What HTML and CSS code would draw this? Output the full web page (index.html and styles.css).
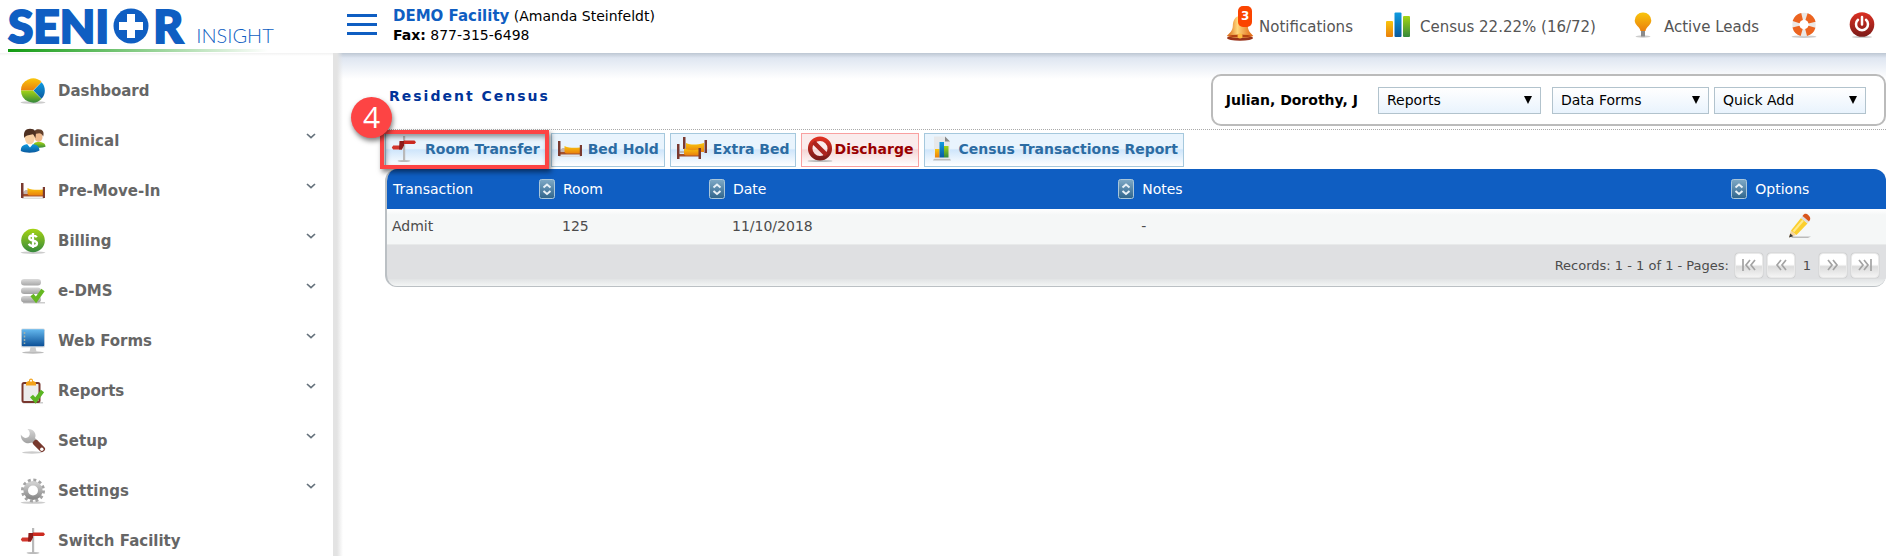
FILE: index.html
```html
<!DOCTYPE html>
<html lang="en">
<head>
    <meta charset="UTF-8">
    <meta name="viewport" content="width=device-width, initial-scale=1.0">
    <title>Senior Insight - Resident Census</title>
    <link rel="stylesheet" href="styles.css">
</head>
<body>
    <!-- shared icons -->
    <svg class="defs" width="0" height="0" aria-hidden="true">
        <defs>
            <linearGradient id="g-orange" x2="0" y2="1"><stop stop-color="#f9c50c"/><stop offset="1" stop-color="#ea800d"/></linearGradient>
            <linearGradient id="g-blue" x2="0" y2="1"><stop stop-color="#0e9be0"/><stop offset="1" stop-color="#0b5a9e"/></linearGradient>
            <linearGradient id="g-green" x2="0" y2="1"><stop stop-color="#a5d414"/><stop offset="1" stop-color="#35893c"/></linearGradient>
            <linearGradient id="g-grey" x2="0" y2="1"><stop stop-color="#cfcfcf"/><stop offset="1" stop-color="#8b8b8b"/></linearGradient>
            <linearGradient id="g-red" x2="0" y2="1"><stop stop-color="#dc3022"/><stop offset="1" stop-color="#7c1b19"/></linearGradient>
            <linearGradient id="g-screen" x2="0" y2="1"><stop stop-color="#64b8ee"/><stop offset="1" stop-color="#0b4f96"/></linearGradient>
            <linearGradient id="g-bell" x2="1"><stop stop-color="#d9600c"/><stop offset=".4" stop-color="#ffd77c"/><stop offset="1" stop-color="#e0600c"/></linearGradient>
            <linearGradient id="g-sort" x2="0" y2="1"><stop stop-color="#7fa9c6"/><stop offset="1" stop-color="#2f658c"/></linearGradient>
        </defs>
        <symbol id="i-pie" viewBox="0 0 26 26">
            <ellipse cx="13" cy="24.500" rx="12.500" ry="1.300" fill="#ccc"/>
            <path d="M13 12.500H1A12 11.800 0 0 1 21.500 4z" fill="url(#g-orange)"/>
            <path d="M13 12.500H1A12 12 0 0 0 21.500 21z" fill="url(#g-green)"/>
            <path d="M13.500 12.500 21.500 4.200a12 12 0 0 1 0 16.600z" fill="url(#g-blue)"/>
        </symbol>
        <symbol id="i-people" viewBox="0 0 26 26">
            <path d="M13 19c0-4 2-5 5.500-5 4.500 0 7 1.500 7 4.800-4 1.400-8 1.200-12.500.2z" fill="url(#g-green)"/>
            <ellipse cx="18.500" cy="9" rx="4" ry="5" fill="#efb98c"/>
            <path d="M13.800 7c-.5-4 2-6 5-5.800 4 0 5.600 3 4.400 7.300-1-2-2-3-4-3.200-2 0-4 .7-5.400 1.700z" fill="#63402c"/>
            <path d="M.8 23c0-5 2.500-7 9-7s9.600 2 9.700 6.500c-5 2.800-14 2.800-18.700.5z" fill="url(#g-blue)"/>
            <path d="m7 16 3 3.500 3-3.500z" fill="#fff"/>
            <ellipse cx="9.800" cy="10" rx="5" ry="6.300" fill="#f8d0a4"/>
            <path d="M4.300 10C3 4 5.500.8 10 .8c5 0 7 3.200 5.300 9.500-1-2-1.500-3.400-2.500-4C10 7.500 6.500 6.500 4.300 10z" fill="#4e3021"/>
        </symbol>
        <symbol id="i-bed" viewBox="0 0 26 26">
            <path d="M2 19.500h22V21H2z" fill="#ddd"/>
            <path d="M3 14.500c2-3 4-2.500 5-2l.5 4H3z" fill="#c3b3ae"/>
            <path d="M3 16h20v2.500H3z" fill="#a4502b"/>
            <path d="M7.500 10c5 2.300 10 2 15.500 1.500v6H10c-2 0-2.500-1-2.500-2.500z" fill="url(#g-orange)"/>
            <path d="M1 5h2.500v15H1zM22.800 9H25v11h-2.200z" fill="#7a3a30"/>
        </symbol>
        <symbol id="i-beds" viewBox="0 0 32 26">
            <path d="M10 7c5 2 10 2 18 0v9H10z" fill="url(#g-orange)"/>
            <path d="M7 1h2.500v12H7zM28.500 4H31v13h-2.500z" fill="#7a3a30"/>
            <path d="M3 18h20v2.500H3z" fill="#a4502b"/>
            <path d="M8 12.500c5 2 9 2 15 1v6H10c-1.500 0-2-1-2-2.500z" fill="url(#g-orange)"/>
            <path d="M4 15h4v2H4z" fill="#bbb"/>
            <path d="M1 8h2.500v15H1zM22.500 12H25v11h-2.500z" fill="#7a3a30"/>
        </symbol>
        <symbol id="i-dollar" viewBox="0 0 26 26">
            <ellipse cx="13" cy="24.600" rx="12.500" ry="1.300" fill="#ccc"/>
            <circle cx="13" cy="12.500" r="11.800" fill="url(#g-green)"/>
            <path d="M16.800 9.300c-.8-1.500-2.200-2-3.800-2-2.200 0-3.800 1-3.800 2.700 0 3.800 7.800 1.500 7.800 5.300 0 1.700-1.700 2.800-4 2.800-2 0-3.500-.8-4.200-2.300M13 5v15" fill="none" stroke="#fff" stroke-width="2.300"/>
        </symbol>
        <symbol id="i-db" viewBox="0 0 26 26">
            <path d="M3 24h22v1.500H3z" fill="#ccc"/>
            <rect x="1" y="1" width="20" height="6.500" rx="3.200" fill="url(#g-grey)" opacity=".75"/>
            <rect x="1" y="9.500" width="20" height="6.500" rx="3.200" fill="url(#g-grey)" opacity=".8"/>
            <rect x="1" y="18" width="20" height="6.500" rx="3.200" fill="url(#g-grey)" opacity=".85"/>
            <path d="m12 17 4 5 7-10" fill="none" stroke="#65b821" stroke-width="4"/>
        </symbol>
        <symbol id="i-screen" viewBox="0 0 26 26">
            <ellipse cx="13" cy="24.500" rx="11" ry="1.200" fill="#bbb"/>
            <path d="M10.500 19h5l1 5h-7z" fill="#ccc"/>
            <rect x="1" y=".5" width="24" height="19" rx="1.500" fill="#d8dde2"/>
            <rect x="1.800" y="1.300" width="22.400" height="17" rx="1" fill="url(#g-screen)"/>
            <path d="M4.500 4v12" stroke="#9fb1ad" stroke-width="1.500" stroke-dasharray="2 1.500"/>
        </symbol>
        <symbol id="i-clip" viewBox="0 0 26 26">
            <path d="M3 24h20v1.500H3z" fill="#ccc"/>
            <rect x="2.500" y="5" width="17" height="19" rx="1.500" fill="#ececec" stroke="#78372e" stroke-width="2"/>
            <path d="M6 7.500V5c0-1.500 2-1.500 3-2C9-.2 13-.2 13 3c1 .5 3 .5 3 2v2.500z" fill="#f3a21a"/>
            <circle cx="11" cy="2.800" r="1" fill="#fff"/>
            <path d="m11.500 18 4 4.500 7-9.500" fill="none" stroke="#5ab522" stroke-width="4"/>
        </symbol>
        <symbol id="i-wrench" viewBox="0 0 26 26">
            <ellipse cx="12" cy="24.500" rx="10" ry="1.200" fill="#ccc"/>
            <path d="M7.500 1c6-.5 9.500 5 7.500 9l3 3-3.500 3.500-3-2C7 17 .5 13.500.8 6.500c2.500 4 6 4.200 8 2C10.500 6.500 10 3 7.500 1z" fill="url(#g-grey)" opacity=".85"/>
            <path d="m16 15 6 6" stroke="#77392e" stroke-width="6" stroke-linecap="round"/>
            <circle cx="21.800" cy="21.200" r="1.700" fill="#fff"/>
        </symbol>
        <symbol id="i-gear" viewBox="0 0 26 26">
            <ellipse cx="13" cy="24.600" rx="12.500" ry="1.200" fill="#ccc"/>
            <circle cx="13" cy="12.500" r="10.500" fill="none" stroke="#a4a4a4" stroke-width="3" stroke-dasharray="2.900 2.600"/>
            <circle cx="13" cy="12.500" r="7.300" fill="none" stroke="url(#g-grey)" stroke-width="4.600"/>
        </symbol>
        <symbol id="i-sign" viewBox="0 0 26 26">
            <ellipse cx="13" cy="25" rx="6.500" ry=".9" fill="#bbb"/>
            <path d="M12 0h2.200v25H12z" fill="#b9b9b9"/>
            <path d="M13 4.500h10.500L25 6.200 23.500 8H13z" fill="#cc2a20"/>
            <path d="M10 9.500H2.200L.8 11.400l1.400 2H11z" fill="#d2362c"/>
            <path d="M8.500 5H13v4.500l-2 3.900H8z" fill="#8e1b19"/>
        </symbol>
        <symbol id="i-bars" viewBox="0 0 26 26">
            <rect x="1" y="9" width="7" height="16" rx="1" fill="url(#g-orange)"/>
            <rect x="9.500" y=".5" width="7" height="24.500" rx="1" fill="url(#g-blue)"/>
            <rect x="18" y="4" width="7" height="21" rx="1" fill="url(#g-green)"/>
        </symbol>
        <symbol id="i-bell" viewBox="0 0 28 28">
            <ellipse cx="14" cy="25" rx="13" ry="2.800" fill="#99331a"/>
            <path d="M12 1h5v4h-5z" fill="#e48214"/>
            <path d="M14.500 3c6 0 7 5 7.300 10 .2 5 2.200 6 5.500 10-5 2.500-20 2.500-26.500 0 3.500-4 5.700-5 6-10C7 8 8.500 3 14.500 3z" fill="url(#g-bell)"/>
            <ellipse cx="14" cy="23" rx="11" ry="1.500" fill="#b64411"/>
            <circle cx="14" cy="23" r="2.500" fill="#ffbe42"/>
        </symbol>
        <symbol id="i-pin" viewBox="0 0 26 26">
            <ellipse cx="13" cy="24.500" rx="7.500" ry="1.200" fill="#ccc"/>
            <path d="M11 18h4v6.500h-4z" fill="#8b8b8b"/>
            <path d="M13 .5A8 8 0 0 1 21.300 8.500C21.300 13 16 15 15.500 19h-5C10 15 4.700 13 4.700 8.500A8 8 0 0 1 13 .5z" fill="url(#g-orange)"/>
        </symbol>
        <symbol id="i-ring" viewBox="0 0 26 26">
            <ellipse cx="13" cy="24.700" rx="12.500" ry="1.200" fill="#ccc"/>
            <circle cx="13" cy="12.500" r="8.300" fill="none" stroke="#ebe7e4" stroke-width="6.800"/>
            <circle cx="13" cy="12.500" r="8.300" fill="none" stroke="#ec6420" stroke-width="7.200" stroke-dasharray="8.500 4.538" stroke-dashoffset="-2.300"/>
        </symbol>
        <symbol id="i-power" viewBox="0 0 26 26">
            <ellipse cx="13" cy="25" rx="10" ry="1" fill="#ccc"/>
            <circle cx="13" cy="12.500" r="12.300" fill="url(#g-red)"/>
            <path d="M9 7.800a6 6 0 1 0 8 0M13 5v7.500" fill="none" stroke="#fff" stroke-width="2.500" stroke-linecap="round"/>
        </symbol>
        <symbol id="i-stop" viewBox="0 0 26 26">
            <ellipse cx="13" cy="25" rx="12.500" ry="1" fill="#bbb"/>
            <circle cx="13" cy="12.500" r="9.800" fill="none" stroke="url(#g-red)" stroke-width="4.500"/>
            <path d="m6.500 6 13 13" stroke="#ac231d" stroke-width="4.500"/>
        </symbol>
        <symbol id="i-report" viewBox="0 0 26 26">
            <path d="M3 24.500 5 21h14l2 3.500z" fill="#bbb"/>
            <path d="M4 .5h11l5 5V23H4z" fill="#e6e8ea"/>
            <path d="m15 .5 5 5h-5z" fill="#888"/>
            <rect x="5" y="13" width="4.500" height="8.500" fill="url(#g-orange)"/>
            <rect x="9.500" y="6" width="4.500" height="15.500" fill="url(#g-blue)"/>
            <rect x="14" y="10" width="4.500" height="11.500" fill="url(#g-green)"/>
        </symbol>
        <symbol id="i-pencil" viewBox="0 0 26 26">
            <path d="M6 23.500h18l-3 1.500H4z" fill="#bbb"/>
            <path d="M2 24.500 4 17l5 5z" fill="#f3d3a0"/>
            <path d="m2 24.500 1.300-4 3 2.700z" fill="#333"/>
            <path d="M4 17.500 14 5l6.500 5.500L9.500 22z" fill="#fbcf2e"/>
            <path d="M6.500 18.500 16 7.500" stroke="#ffe98b" stroke-width="2"/>
            <path d="m14 5 1.500-2L22 8.500l-1.500 2z" fill="#ddd"/>
            <path d="M15.500 3c2-3 4-2.500 6-.8s2.500 4 .5 6.300z" fill="#d8551c"/>
        </symbol>
        <symbol id="i-sort" viewBox="0 0 16 20">
            <rect x=".5" y=".5" width="15" height="19" rx="2" fill="url(#g-sort)" stroke="#a9c6da"/>
            <path d="m4.500 8.500 3.500-3 3.500 3M4.500 12l3.500 3 3.500-3" fill="none" stroke="#e8f1f7" stroke-width="2"/>
        </symbol>
        <symbol id="i-chev" viewBox="0 0 10 6">
            <path d="m1 1 4 3.700L9 1" fill="none" stroke="#66727c" stroke-width="1.700"/>
        </symbol>
        <symbol id="i-prev" viewBox="0 0 14 12">
            <path d="M7 1 3 6l4 5M12 1 8 6l4 5" fill="none" stroke="#a3a3a3" stroke-width="1.700"/>
        </symbol>
        <symbol id="i-first" viewBox="0 0 14 12">
            <path d="M1 0v12M8 1 4 6l4 5M13 1 9 6l4 5" fill="none" stroke="#a3a3a3" stroke-width="1.700"/>
        </symbol>
    </svg>

    <header class="topbar">
        <a href="#" class="logo" aria-label="Senior Insight">
            <span class="logo-name">SENI</span>
            <svg class="logo-cross" viewBox="0 0 36 36"><circle cx="18" cy="18" r="17.500" fill="#0f5ec2"/><path d="M14 6h8v8h8v8h-8v8h-8v-8H6v-8h8z" fill="#fff"/></svg>
            <span class="logo-name">R</span>
            <span class="logo-sub">INSIGHT</span>
        </a>
        <button class="menu-btn" aria-label="Toggle menu"><span></span><span></span><span></span></button>
        <div class="facility">
            <div><a href="#">DEMO Facility</a> (Amanda Steinfeldt)</div>
            <div><b>Fax:</b> 877-315-6498</div>
        </div>
        <nav class="top-links">
            <a href="#" class="notif"><svg class="bell"><use href="#i-bell"/></svg><span class="badge">3</span>Notifications</a>
            <a href="#" class="census"><svg class="icon"><use href="#i-bars"/></svg>Census 22.22% (16/72)</a>
            <a href="#" class="leads"><svg class="icon"><use href="#i-pin"/></svg>Active Leads</a>
            <a href="#" class="help" aria-label="Help"><svg class="icon"><use href="#i-ring"/></svg></a>
            <a href="#" aria-label="Log out"><svg class="icon"><use href="#i-power"/></svg></a>
        </nav>
    </header>

    <div class="page">
        <nav class="sidebar">
            <a href="#"><svg class="icon"><use href="#i-pie"/></svg>Dashboard</a>
            <a href="#"><svg class="icon"><use href="#i-people"/></svg>Clinical<svg class="chev"><use href="#i-chev"/></svg></a>
            <a href="#"><svg class="icon"><use href="#i-bed"/></svg>Pre-Move-In<svg class="chev"><use href="#i-chev"/></svg></a>
            <a href="#"><svg class="icon"><use href="#i-dollar"/></svg>Billing<svg class="chev"><use href="#i-chev"/></svg></a>
            <a href="#"><svg class="icon"><use href="#i-db"/></svg>e-DMS<svg class="chev"><use href="#i-chev"/></svg></a>
            <a href="#"><svg class="icon"><use href="#i-screen"/></svg>Web Forms<svg class="chev"><use href="#i-chev"/></svg></a>
            <a href="#"><svg class="icon"><use href="#i-clip"/></svg>Reports<svg class="chev"><use href="#i-chev"/></svg></a>
            <a href="#"><svg class="icon"><use href="#i-wrench"/></svg>Setup<svg class="chev"><use href="#i-chev"/></svg></a>
            <a href="#"><svg class="icon"><use href="#i-gear"/></svg>Settings<svg class="chev"><use href="#i-chev"/></svg></a>
            <a href="#"><svg class="icon"><use href="#i-sign"/></svg>Switch Facility</a>
        </nav>

        <main class="content">
            <div class="title-row">
                <h1>Resident Census</h1>
                <div class="resident">
                    <b>Julian, Dorothy, J</b>
                    <select class="sel-reports" aria-label="Reports"><option>Reports</option></select>
                    <select class="sel-forms" aria-label="Data Forms"><option>Data Forms</option></select>
                    <select class="sel-add" aria-label="Quick Add"><option>Quick Add</option></select>
                </div>
            </div>

            <div class="toolbar">
                <div class="step">
                    <button class="btn"><svg class="icon"><use href="#i-sign"/></svg>Room Transfer</button>
                    <span class="step-box"></span>
                    <span class="step-num">4</span>
                </div>
                <button class="btn btn-bed"><svg class="icon"><use href="#i-bed"/></svg>Bed Hold</button>
                <button class="btn btn-bed"><svg class="icon icon-wide"><use href="#i-beds"/></svg>Extra Bed</button>
                <button class="btn btn-red"><svg class="icon"><use href="#i-stop"/></svg>Discharge</button>
                <button class="btn btn-report"><svg class="icon"><use href="#i-report"/></svg>Census Transactions Report</button>
            </div>

            <div class="grid">
                <table>
                    <thead>
                        <tr>
                            <th class="c-type"><div>Transaction<svg class="sort"><use href="#i-sort"/></svg></div></th>
                            <th class="c-room"><div>Room<svg class="sort"><use href="#i-sort"/></svg></div></th>
                            <th class="c-date"><div>Date<svg class="sort"><use href="#i-sort"/></svg></div></th>
                            <th class="c-notes"><div>Notes<svg class="sort"><use href="#i-sort"/></svg></div></th>
                            <th><div>Options</div></th>
                        </tr>
                    </thead>
                    <tbody>
                        <tr>
                            <td>Admit</td>
                            <td>125</td>
                            <td>11/10/2018</td>
                            <td>-</td>
                            <td class="options"><button aria-label="Edit"><svg class="icon"><use href="#i-pencil"/></svg></button></td>
                        </tr>
                    </tbody>
                </table>
                <div class="pager">
                    <span class="records">Records: 1 - 1 of 1 - Pages:</span>
                    <button aria-label="First page"><svg><use href="#i-first"/></svg></button>
                    <button aria-label="Previous page"><svg><use href="#i-prev"/></svg></button>
                    <span class="current">1</span>
                    <button class="next" aria-label="Next page"><svg><use href="#i-prev"/></svg></button>
                    <button class="next" aria-label="Last page"><svg><use href="#i-first"/></svg></button>
                </div>
                <div class="grid-end"></div>
            </div>
        </main>
    </div>
</body>
</html>
```
FILE: styles.css
```css
* {
    box-sizing: border-box;
}
body {
    margin: 0;
    min-height: 100vh;
    display: flex;
    flex-direction: column;
    overflow: hidden;
    font-family: Verdana, "DejaVu Sans", sans-serif;
    font-size: 14px;
    color: #000;
    background: #fff;
}
a {
    color: inherit;
    text-decoration: none;
}
button, select {
    font: inherit;
    cursor: pointer;
}
.defs {
    position: absolute;
}
.icon {
    width: 26px;
    height: 26px;
    flex: none;
}
.icon-wide {
    width: 32px;
}

/* top bar */
.topbar {
    display: flex;
    height: 53px;
    background: #fff;
}
.logo {
    width: 333px;
    flex: none;
    padding: 8px 0 0 8px;
    display: flex;
    color: #0f5ec2;
    background: linear-gradient(to right, #119a11, #fff) no-repeat 8px 49px / 260px 3px;
}
.logo-name {
    font-family: Lato, sans-serif;
    font-weight: 900;
    font-size: 46px;
    line-height: 35px;
    -webkit-text-stroke: 2px #0f5ec2;
}
.logo-cross {
    width: 36px;
    height: 36px;
    margin: 0 4px;
}
.logo-sub {
    font-family: Lato, sans-serif;
    font-weight: 300;
    font-size: 20px;
    line-height: 24px;
    margin: 15px 0 0 13px;
}
.menu-btn {
    display: flex;
    flex-direction: column;
    gap: 6px;
    width: 30px;
    margin: 14px 0 0 14px;
    padding: 0;
    border: 0;
    background: none;
}
.menu-btn span {
    height: 3px;
    background: #0f5ec2;
}
.facility {
    margin-left: 16px;
    padding-top: 7px;
    line-height: 19px;
}
.facility a {
    font-size: 15px;
    font-weight: bold;
    color: #0f5ec2;
}
.top-links {
    margin-left: auto;
    padding-right: 11px;
    display: flex;
    align-items: center;
    font-size: 15px;
    color: #555;
}
.top-links a {
    display: flex;
    align-items: center;
    position: relative;
    gap: 8px;
}
.top-links .icon {
    margin-bottom: 3px;
}
.bell {
    width: 28px;
    height: 28px;
}
.badge {
    position: absolute;
    left: 12px;
    top: -7px;
    width: 14px;
    height: 21px;
    border-radius: 5px;
    background: #fb4400;
    color: #fff;
    font-size: 12px;
    font-weight: bold;
    line-height: 21px;
    text-align: center;
}
.top-links .notif {
    gap: 5px;
    margin-right: 32px;
}
.top-links .census {
    gap: 9px;
    margin-right: 34px;
}
.leads, .help {
    margin-right: 32px;
}

/* sidebar */
.page {
    flex: 1;
    display: flex;
}
.sidebar {
    width: 333px;
    height: 503px;
    flex: none;
    padding: 13px 17px 0 20px;
    overflow: hidden;
    background: linear-gradient(#f2f2f2, #fff 3px);
}
.sidebar a {
    display: flex;
    align-items: center;
    height: 50px;
    gap: 12px;
    font-size: 15px;
    font-weight: bold;
    color: #666;
}
.chev {
    width: 10px;
    height: 6px;
    margin: 0 0 10px auto;
}

/* content */
.content {
    flex: 1;
    min-width: 0;
    padding: 21px 0 0 52px;
    background: linear-gradient(to right, #e3e3e3 4px, rgba(255, 255, 255, 0) 10px), linear-gradient(#bdc7d3, #dfe6f1 5px, #fff 26px);
}
.title-row {
    display: flex;
    justify-content: space-between;
    height: 56px;
    border-bottom: 1px dotted #aaa;
}
h1 {
    margin: 12px 0 0 4px;
    font-size: 14px;
    line-height: 20px;
    letter-spacing: 2px;
    color: #039;
}
.resident {
    display: flex;
    align-items: center;
    height: 52px;
    padding: 0 18px 0 13px;
    border: 2px solid #bbb;
    border-radius: 10px;
    background: #fff;
}
.resident b {
    margin-right: 20px;
}
select {
    appearance: none;
    height: 27px;
    padding: 0 8px;
    border: 1px solid #b2c3cd;
    border-radius: 0;
    color: #000;
    background: url("data:image/svg+xml,%3Csvg xmlns='http://www.w3.org/2000/svg' width='8' height='8'%3E%3Cpath d='M0 0h8L4 8z'/%3E%3C/svg%3E") no-repeat right 8px center, linear-gradient(#fff, #e9f3fd);
}
.sel-reports {
    width: 163px;
    margin-right: 11px;
}
.sel-forms {
    width: 157px;
    margin-right: 5px;
}
.sel-add {
    width: 152px;
}

/* toolbar */
.toolbar {
    display: flex;
    gap: 5px;
    padding-top: 3px;
}
.btn {
    display: flex;
    align-items: center;
    gap: 8px;
    height: 34px;
    padding: 0 5px 2px;
    border: 1px solid #a5c8dd;
    font-weight: bold;
    color: #2c6ca3;
    background: linear-gradient(#e9f4fd 45%, #cfe6fb 50%, #fff);
}
.btn-bed {
    gap: 5px;
}
.btn-report {
    gap: 2px;
}
.btn-red {
    gap: 2px;
    border-color: #f9a0a0;
    color: #900;
    background: linear-gradient(#faecec 45%, #f5d6d6 50%, #fff);
}
.step {
    position: relative;
}
.step-box {
    position: absolute;
    inset: -3px -3px -2px -5px;
    border: 4px solid #fd4444;
    box-shadow: 2px 3px 5px rgba(0, 0, 0, 0.5), inset 2px 3px 5px rgba(0, 0, 0, 0.4);
}
.step-num {
    position: absolute;
    left: -34px;
    top: -36px;
    width: 41px;
    height: 41px;
    border-radius: 50%;
    background: #fd4444;
    box-shadow: 1px 3px 5px rgba(0, 0, 0, 0.5);
    color: #fff;
    font-family: "Open Sans", sans-serif;
    font-size: 30px;
    line-height: 40px;
    text-align: center;
}

/* table */
.grid {
    margin-top: 2px;
    border: 1px solid #bbc0c4;
    border-width: 0 0 1px 2px;
    border-radius: 12px;
    overflow: hidden;
    background: #dfe0e2;
    color: #4c4c4c;
}
table {
    width: 100%;
    table-layout: fixed;
    border-collapse: collapse;
}
th {
    height: 40px;
    padding: 0 2px 0 6px;
    font-weight: normal;
    text-align: left;
    color: #fff;
    background: #0f5ec2;
}
th div {
    display: flex;
    align-items: center;
    justify-content: space-between;
}
.sort {
    width: 16px;
    height: 20px;
}
.c-type, .c-room {
    width: 170px;
}
.c-date {
    width: 27.3%;
}
.c-notes {
    width: 40.9%;
}
td {
    height: 35px;
    padding: 0 5px;
    background: linear-gradient(#fff, #f5f7f7 6px);
    border-bottom: 1px solid #e8eaea;
}
.options {
    padding-left: 38px;
}
.options button {
    display: block;
    padding: 0;
    border: 0;
    background: none;
}
.options .icon {
    display: block;
}
.pager {
    display: flex;
    align-items: center;
    justify-content: flex-end;
    gap: 4px;
    height: 34px;
    padding: 7px 7px 0 0;
    font-size: 13px;
}
.pager button {
    display: flex;
    align-items: center;
    justify-content: center;
    width: 28px;
    height: 25px;
    padding: 0;
    border: 1px solid #e9e9e9;
    border-radius: 4px;
    background: linear-gradient(#fff 45%, #dcdcdc 55%, #f4f4f4);
    box-shadow: 0 0 1px #999;
}
.pager svg {
    width: 14px;
    height: 12px;
}
.pager .next svg {
    transform: scaleX(-1);
}
.records {
    margin-right: 2px;
}
.current {
    width: 16px;
    text-align: center;
}
.grid-end {
    height: 7px;
    background: linear-gradient(#e2e4e5, #f3f5f5);
}
```
